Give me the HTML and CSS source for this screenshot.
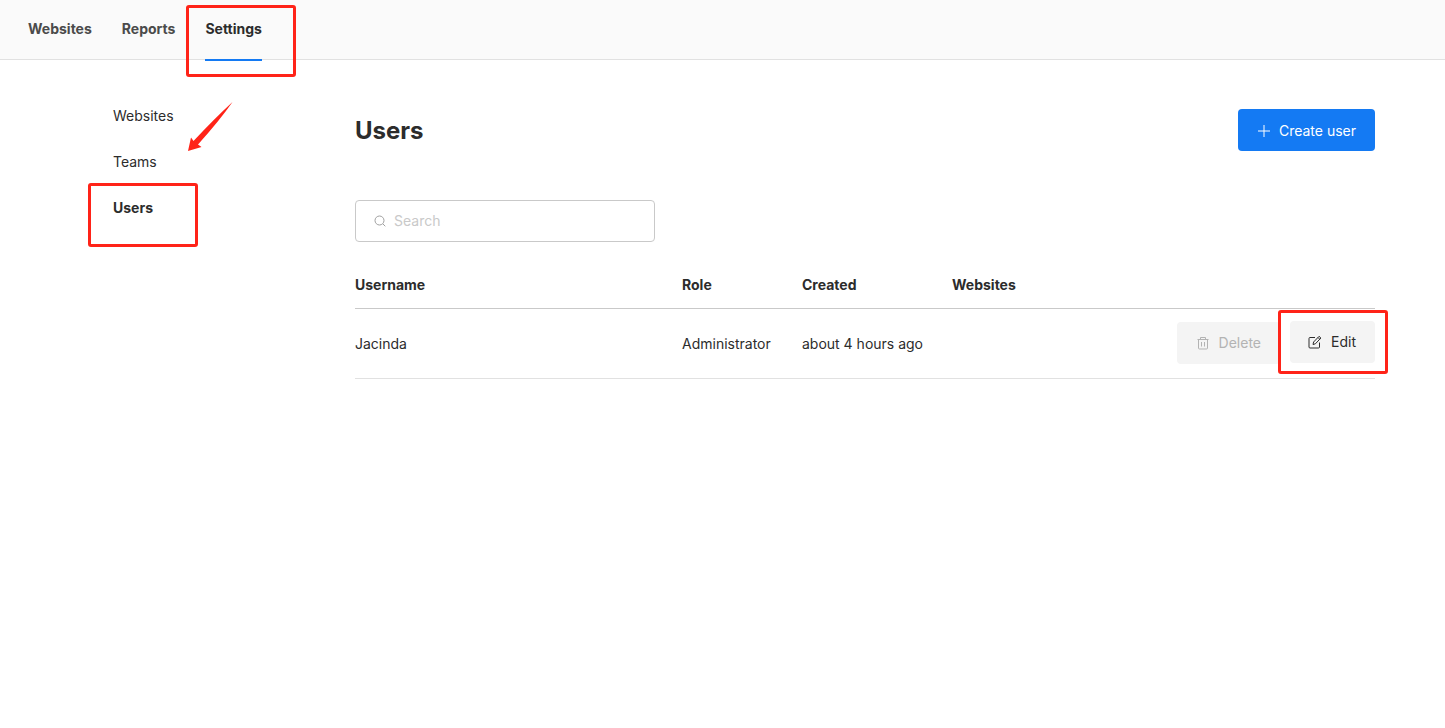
FILE: index.html
```html
<!DOCTYPE html>
<html lang="en">
<head>
<meta charset="utf-8">
<title>Users</title>
<link rel="stylesheet" href="styles.css">
</head>
<body>
<header class="topbar">
  <nav class="topnav" aria-label="Main">
    <a href="#">Websites</a>
    <a href="#">Reports</a>
    <a href="#" class="active">Settings<span class="mark mark-settings"></span></a>
  </nav>
</header>
<div class="layout">
  <nav class="sidenav" aria-label="Settings">
    <a href="#">Websites</a>
    <a href="#">Teams
      <svg class="arrow" viewBox="0 0 46 50" aria-hidden="true"><path d="M45.500 0 Q33 18 11 42.500L14.500 45 1 49 4 35.500 6.500 39Q27 17 45.500 0Z" fill="#ff2318"/></svg>
    </a>
    <a href="#" class="selected">Users<span class="mark mark-users"></span></a>
  </nav>
  <main class="content">
    <div class="page-head">
      <h1>Users</h1>
      <button type="button" class="btn primary">
        <svg class="icon" viewBox="0 0 14 14" aria-hidden="true"><path d="M7 1v12M1 7h12"/></svg>
        Create user
      </button>
    </div>
    <label class="search">
      <svg class="icon" viewBox="0 0 14 14" aria-hidden="true"><circle cx="6.500" cy="6.500" r="4.500"/><path d="m10 10 2.300 2.300"/></svg>
      <input type="text" placeholder="Search" aria-label="Search">
    </label>
    <table class="users">
      <colgroup><col><col class="c-role"><col class="c-created"><col class="c-sites"><col class="c-actions"></colgroup>
      <thead><tr><th>Username</th><th>Role</th><th>Created</th><th>Websites</th><th></th></tr></thead>
      <tbody><tr>
        <td>Jacinda</td><td>Administrator</td><td>about 4 hours ago</td><td></td>
        <td>
          <div class="actions">
            <button type="button" class="btn" disabled>
              <svg class="icon" viewBox="0 0 14 14" aria-hidden="true"><path d="M1.500 3.500h11M4.500 3.500v-2h5v2M2.500 3.500v8.500a1 1 0 0 0 1 1h7a1 1 0 0 0 1-1V3.500M5.500 6v4.500M8.500 6v4.500"/></svg>
              Delete
            </button>
            <div class="edit-wrap">
              <span class="mark mark-edit"></span>
              <button type="button" class="btn edit">
                <svg class="icon" viewBox="0 0 14 14" aria-hidden="true"><path d="M7 2.500H2a1 1 0 0 0-1 1V12a1 1 0 0 0 1 1h8.500a1 1 0 0 0 1-1V7.500M5 9.500l.6-2.500 5.500-5.700 1.800 1.700-5.500 5.800ZM10 2.500l1.700 1.700"/></svg>
                Edit
              </button>
            </div>
          </div>
        </td>
      </tr></tbody>
    </table>
  </main>
</div>
</body>
</html>
```
FILE: styles.css
```css
* { box-sizing: border-box; }
body {
  margin: 0;
  background: #fff;
  color: #2c2c2c;
  font: 14px/20px Inter, "Liberation Sans", sans-serif;
}
a { color: inherit; text-decoration: none; }

.topbar {
  height: 60px;
  padding-left: 28px;
  background: #fafafa;
  border-bottom: 1px solid #e1e1e1;
}
.topnav { display: flex; gap: 30px; font-weight: 700; color: #4b4b4b; }
.topnav a { height: 61px; padding-top: 19px; }
.topnav .active {
  position: relative;
  color: #2c2c2c;
  border-bottom: 2px solid #147af3;
}

.mark {
  position: absolute;
  border: 3px solid #ff2318;
  border-radius: 3px;
  pointer-events: none;
}
.mark-settings { top: 5px; left: -19px; width: 110px; height: 72px; }
.mark-users { top: -15px; left: -25px; width: 110px; height: 64px; }
.mark-edit { top: -11px; left: -12px; width: 110px; height: 64px; background: #fff; }

.layout { display: flex; padding: 46px 70px 0 113px; }
.sidenav { display: flex; flex: 0 0 242px; flex-direction: column; align-items: flex-start; gap: 26px; }
.sidenav a { position: relative; }
.sidenav .selected { font-weight: 700; }
.arrow { position: absolute; left: 74px; top: -50px; width: 46px; height: 50px; }

.content { flex: 1; padding-top: 3px; }
.page-head { display: flex; align-items: center; justify-content: space-between; }
h1 { margin: 0; padding-top: 2px; font-size: 24px; line-height: 32px; font-weight: 700; }

.btn {
  display: flex;
  align-items: center;
  gap: 9px;
  height: 42px;
  padding: 0 19px;
  border: 0;
  border-radius: 4px;
  background: #f4f4f4;
  color: #2c2c2c;
  font: inherit;
  white-space: nowrap;
}
.btn.primary { gap: 8px; padding-top: 1px; background: #147af3; color: #fff; }
.btn:disabled { color: #b3b3b3; }
.icon { flex: none; width: 14px; height: 14px; fill: none; stroke: currentColor; stroke-width: 1; }

.search {
  display: flex;
  align-items: center;
  gap: 7px;
  width: 300px;
  height: 42px;
  margin-top: 49px;
  padding: 0 17px;
  border: 1px solid #c9c9c9;
  border-radius: 4px;
  color: #a0a0a0;
}
.search input { flex: 1; min-width: 0; padding: 0; border: 0; outline: 0; background: none; color: #2c2c2c; font: inherit; }
.search input::placeholder { color: #c9c9c9; opacity: 1; }

.users { width: 100%; margin-top: 33px; border-collapse: separate; border-spacing: 0; table-layout: fixed; }
.users th, .users td { padding: 0; text-align: left; }
.users th { padding-bottom: 13px; border-bottom: 1px solid #c9c9c9; font-weight: 700; }
.users td { height: 70px; border-bottom: 1px solid #e1e1e1; }
.c-role { width: 120px; }
.c-created { width: 150px; }
.c-sites { width: 120px; }
.c-actions { width: 303px; }
.actions { display: flex; justify-content: flex-end; gap: 10px; padding-bottom: 2px; }
.edit-wrap { position: relative; margin-top: -1px; }
.edit { position: relative; padding-left: 18px; }
```
